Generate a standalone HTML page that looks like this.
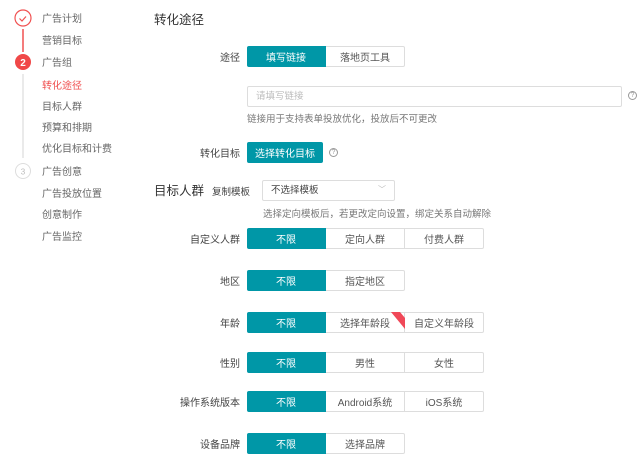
<!DOCTYPE html>
<html><head><meta charset="utf-8"><style>
*{margin:0;padding:0;box-sizing:border-box}
body{width:640px;height:461px;background:#fff;font-family:"Liberation Sans","Noto Sans CJK SC",sans-serif;font-size:10px;color:#555;position:relative;overflow:hidden;line-height:12px}
.a{position:absolute;white-space:nowrap}
.nav{left:42px;font-size:10px;color:#666;height:12px;line-height:12px}
.lbl{right:400px;font-size:10px;color:#444;text-align:right;line-height:21px;height:21px;padding-top:2px}
.g{position:absolute;left:247px;display:flex;height:21px}
.g div{width:79px;height:21px;border:1px solid #ddd;border-left:none;display:flex;align-items:center;justify-content:center;font-size:10px;line-height:12px;padding-top:4px;color:#555;background:#fff}
.g div:first-child{background:#0097a7;color:#fff;border-color:#0097a7;border-radius:2px 0 0 2px}
.g div:last-child{border-radius:0 2px 2px 0}
.hint{font-size:9.5px;color:#777}
.q{width:9px;height:9px;border:1px solid #999;border-radius:50%;font-size:7px;line-height:7px;text-align:center;color:#999}
</style></head><body>
<svg class="a" style="left:0;top:0" width="40" height="250">
<circle cx="23" cy="18" r="8" fill="#fff" stroke="#f05050" stroke-width="1.2"/>
<path d="M19.5 18.5l2.5 2.5 4-4.5" fill="none" stroke="#f05050" stroke-width="1.2"/>
<line x1="23" y1="29" x2="23" y2="52" stroke="#f05050" stroke-width="1.5"/>
<circle cx="23" cy="62" r="8" fill="#f04848"/>
<text x="23" y="66" font-size="10" font-weight="bold" fill="#fff" text-anchor="middle" font-family="Liberation Sans">2</text>
<line x1="23" y1="74" x2="23" y2="158" stroke="#e3e3e3" stroke-width="1.5"/>
<circle cx="23" cy="171" r="7.5" fill="#fff" stroke="#ddd"/>
<text x="23" y="174.5" font-size="8" fill="#bbb" text-anchor="middle" font-family="Liberation Sans">3</text>
</svg>
<div class="a nav" style="top:14px">广告计划</div>
<div class="a nav" style="top:36px">营销目标</div>
<div class="a nav" style="top:58px">广告组</div>
<div class="a nav" style="top:81px;color:#f05050">转化途径</div>
<div class="a nav" style="top:102px">目标人群</div>
<div class="a nav" style="top:123px">预算和排期</div>
<div class="a nav" style="top:144px">优化目标和计费</div>
<div class="a nav" style="top:167px">广告创意</div>
<div class="a nav" style="top:189px">广告投放位置</div>
<div class="a nav" style="top:210px">创意制作</div>
<div class="a nav" style="top:232px">广告监控</div>

<div class="a" style="left:154px;top:13px;font-size:12.5px;line-height:15px;color:#333">转化途径</div>
<div class="a lbl" style="top:46px">途径</div>
<div class="g" style="top:46px"><div>填写链接</div><div>落地页工具</div></div>
<div class="a" style="left:247px;top:86px;width:375px;height:21px;border:1px solid #ddd;border-radius:2px;padding:4px 0 0 8px;line-height:12px;color:#bbb;font-size:9.5px">请填写链接</div>
<div class="a q" style="left:628px;top:91px">?</div>
<div class="a hint" style="left:247px;top:114px">链接用于支持表单投放优化，投放后不可更改</div>
<div class="a lbl" style="top:142px">转化目标</div>
<div class="a" style="left:247px;top:142px;width:76px;height:21px;background:#0097a7;color:#fff;border-radius:2px;display:flex;align-items:center;justify-content:center;padding-top:4px;font-size:10px">选择转化目标</div>
<div class="a q" style="left:329px;top:148px">?</div>

<div class="a" style="left:154px;top:184px;font-size:12.5px;line-height:15px;color:#333">目标人群</div>
<div class="a" style="left:212px;top:187px;font-size:9.5px;color:#444">复制模板</div>
<div class="a" style="left:262px;top:180px;width:133px;height:21px;border:1px solid #ddd;border-radius:2px;padding:4px 0 0 8px;line-height:12px;font-size:9.5px;color:#444">不选择模板<span style="position:absolute;right:8px;top:3px;color:#bbb;font-size:8px">﹀</span></div>
<div class="a hint" style="left:263px;top:209px">选择定向模板后，若更改定向设置，绑定关系自动解除</div>

<div class="a lbl" style="top:228px">自定义人群</div>
<div class="g" style="top:228px"><div>不限</div><div>定向人群</div><div>付费人群</div></div>
<div class="a lbl" style="top:270px">地区</div>
<div class="g" style="top:270px"><div>不限</div><div>指定地区</div></div>
<div class="a lbl" style="top:312px">年龄</div>
<div class="g" style="top:312px"><div>不限</div><div>选择年龄段</div><div>自定义年龄段</div></div>
<svg class="a" style="left:390px;top:312px" width="16" height="22"><polygon points="1,0 10,0 15,6 15,17" fill="#f04858"/></svg>
<div class="a lbl" style="top:352px">性别</div>
<div class="g" style="top:352px"><div>不限</div><div>男性</div><div>女性</div></div>
<div class="a lbl" style="top:391px">操作系统版本</div>
<div class="g" style="top:391px"><div>不限</div><div>Android系统</div><div>iOS系统</div></div>
<div class="a lbl" style="top:433px">设备品牌</div>
<div class="g" style="top:433px"><div>不限</div><div>选择品牌</div></div>
</body></html>
